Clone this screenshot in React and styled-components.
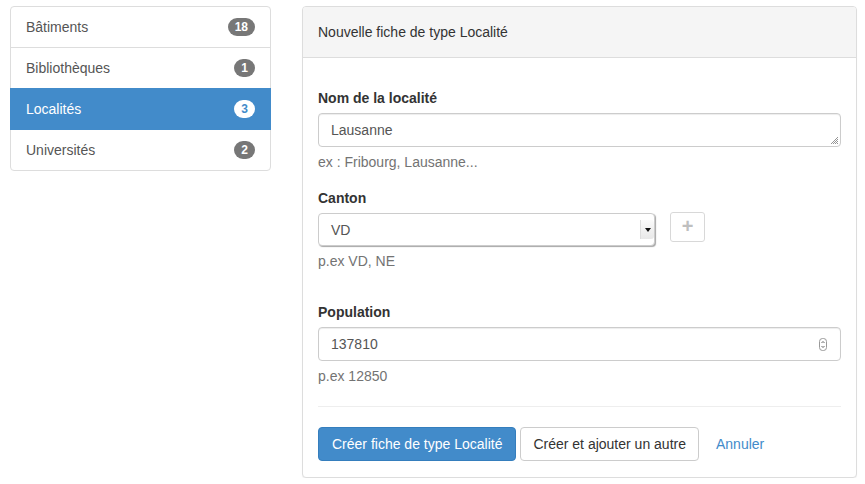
import React from "react";
import styled, { createGlobalStyle } from "styled-components";

const GlobalStyle = createGlobalStyle`
  body {
    margin: 0;
    background: #fff;
    font-family: "Liberation Sans", Arial, sans-serif;
    font-size: 14px;
    line-height: 20px;
    color: #333;
  }
  * { box-sizing: border-box; }
`;

const Page = styled.div`
  display: flex;
  align-items: flex-start;
  gap: 31px;
  padding: 6px 8px 0 10px;
`;

const ListGroup = styled.div`
  width: 261px;
  flex-shrink: 0;
  display: flex;
  flex-direction: column;
`;

const ListItem = styled.div`
  display: flex;
  align-items: center;
  justify-content: space-between;
  padding: 10px 15px;
  margin-bottom: -1px;
  border: 1px solid ${(p) => (p.$active ? "#428bca" : "#ddd")};
  background: ${(p) => (p.$active ? "#428bca" : "#fff")};
  color: ${(p) => (p.$active ? "#fff" : "#555")};
  position: relative;
  z-index: ${(p) => (p.$active ? 2 : 1)};

  &:first-child {
    border-top-left-radius: 4px;
    border-top-right-radius: 4px;
  }
  &:last-child {
    border-bottom-left-radius: 4px;
    border-bottom-right-radius: 4px;
  }
`;

const Badge = styled.span`
  display: inline-block;
  min-width: 10px;
  padding: 3px 7px;
  font-size: 12px;
  font-weight: bold;
  line-height: 1;
  text-align: center;
  border-radius: 10px;
  background: ${(p) => (p.$active ? "#fff" : "#777")};
  color: ${(p) => (p.$active ? "#428bca" : "#fff")};
`;

const Panel = styled.div`
  flex: 1;
  border: 1px solid #ddd;
  border-radius: 4px;
  box-shadow: 0 1px 1px rgba(0, 0, 0, 0.05);
  background: #fff;
`;

const PanelHeading = styled.div`
  padding: 15px 15px;
  background: #f5f5f5;
  border-bottom: 1px solid #ddd;
  border-top-left-radius: 3px;
  border-top-right-radius: 3px;
  color: #333;
`;

const PanelBody = styled.div`
  padding: 30px 15px 16px;
`;

const FormGroup = styled.div`
  margin-bottom: ${(p) => p.$mb || 16}px;
`;

const Label = styled.label`
  display: block;
  font-weight: bold;
  margin-bottom: 5px;
  color: #333;
`;

const Field = styled.div`
  position: relative;
  display: flex;
  align-items: center;
  height: ${(p) => p.$h || 34}px;
  padding: 6px 12px;
  border: 1px solid #ccc;
  border-radius: 4px;
  background: #fff;
  box-shadow: inset 0 1px 1px rgba(0, 0, 0, 0.075);
  color: #555;
`;

const Help = styled.p`
  margin: 5px 0 0;
  color: #737373;
`;

const Row = styled.div`
  display: flex;
  align-items: flex-start;
  gap: 15px;
`;

const SelectBox = styled(Field)`
  width: 337px;
  padding-right: 0;
  justify-content: space-between;
  box-shadow: 1px 1px 1px rgba(0, 0, 0, 0.35);
`;

const SelectArrow = styled.span`
  width: 14px;
  height: 100%;
  display: flex;
  align-items: center;
  justify-content: center;
  background: linear-gradient(#fafafa, #e8e8e8);
  border-left: 1px solid #ddd;
  border-radius: 0 3px 3px 0;
`;

const PlusButton = styled.button`
  width: 35px;
  height: 30px;
  margin-top: -1px;
  border: 1px solid #ccc;
  border-radius: 3px;
  background: #fff;
  color: #aaa;
  font-family: inherit;
  font-size: 20px;
  font-weight: bold;
  line-height: 1;
  padding: 0 0 2px;
  opacity: 0.75;
`;

const Corner = styled.svg`
  position: absolute;
  right: 1px;
  bottom: 1px;
`;

const Spinner = styled.svg`
  position: absolute;
  right: 13px;
  top: 10px;
`;

const Divider = styled.hr`
  border: 0;
  border-top: 1px solid #eee;
  margin: 20px 0 20px;
`;

const Actions = styled.div`
  display: flex;
  align-items: center;
  gap: 4px;
`;

const Button = styled.button`
  height: 34px;
  padding: 6px ${(p) => (p.$primary ? 13 : 12)}px;
  font-family: inherit;
  font-size: 14px;
  line-height: 20px;
  border-radius: 4px;
  border: 1px solid ${(p) => (p.$primary ? "#357ebd" : "#ccc")};
  background: ${(p) => (p.$primary ? "#428bca" : "#fff")};
  color: ${(p) => (p.$primary ? "#fff" : "#333")};
`;

const LinkButton = styled(Button)`
  border-color: transparent;
  background: transparent;
  color: #428bca;
`;

const items = [
  { name: "Bâtiments", count: 18 },
  { name: "Bibliothèques", count: 1 },
  { name: "Localités", count: 3, active: true },
  { name: "Universités", count: 2 },
];

export default function App() {
  return (
    <>
      <GlobalStyle />
      <Page>
        <ListGroup>
          {items.map((it) => (
            <ListItem key={it.name} $active={it.active}>
              <span>{it.name}</span>
              <Badge $active={it.active}>{it.count}</Badge>
            </ListItem>
          ))}
        </ListGroup>

        <Panel>
          <PanelHeading>Nouvelle fiche de type Localité</PanelHeading>
          <PanelBody>
            <FormGroup>
              <Label>Nom de la localité</Label>
              <Field>
                Lausanne
                <Corner width="10" height="10" viewBox="0 0 10 10">
                  <path d="M9 2 L2 9 M9 4 L4 9 M9 6 L6 9 M9 8 L8 9" stroke="#888" strokeWidth="0.9" />
                </Corner>
              </Field>
              <Help>ex : Fribourg, Lausanne...</Help>
            </FormGroup>

            <FormGroup $mb={31}>
              <Label>Canton</Label>
              <Row>
                <div>
                  <SelectBox $h={33}>
                    VD
                    <SelectArrow>
                      <svg width="6" height="4" viewBox="0 0 6 4">
                        <path d="M0 0 L6 0 L3 4 Z" fill="#111" />
                      </svg>
                    </SelectArrow>
                  </SelectBox>
                  <Help>p.ex VD, NE</Help>
                </div>
                <PlusButton>+</PlusButton>
              </Row>
            </FormGroup>

            <FormGroup $mb={0}>
              <Label>Population</Label>
              <Field>
                137810
                <Spinner width="8" height="13" viewBox="0 0 8 13">
                  <rect x="0.5" y="0.5" width="7" height="12" rx="3" fill="#fff" stroke="#999" />
                  <path d="M2.5 5 L4 3.5 L5.5 5 M2.5 8 L4 9.5 L5.5 8" stroke="#555" fill="none" strokeWidth="0.9" />
                </Spinner>
              </Field>
              <Help>p.ex 12850</Help>
            </FormGroup>

            <Divider />

            <Actions>
              <Button $primary>Créer fiche de type Localité</Button>
              <Button>Créer et ajouter un autre</Button>
              <LinkButton>Annuler</LinkButton>
            </Actions>
          </PanelBody>
        </Panel>
      </Page>
    </>
  );
}
